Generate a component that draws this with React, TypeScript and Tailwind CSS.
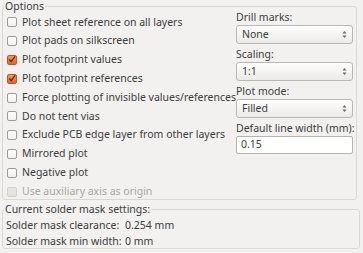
import { ReactNode } from "react";

const leftOptions = [
  { label: "Plot sheet reference on all layers", checked: false },
  { label: "Plot pads on silkscreen", checked: false },
  { label: "Plot footprint values", checked: true },
  { label: "Plot footprint references", checked: true },
  { label: "Force plotting of invisible values/references", checked: false },
  { label: "Do not tent vias", checked: false },
  { label: "Exclude PCB edge layer from other layers", checked: false },
  { label: "Mirrored plot", checked: false },
  { label: "Negative plot", checked: false },
  { label: "Use auxiliary axis as origin", checked: false, disabled: true },
];

function CheckBox({ checked, disabled }: { checked: boolean; disabled?: boolean }) {
  if (checked) {
    return (
      <span className="w-[10px] h-[10px] rounded-[2px] border border-[#c4561f] bg-gradient-to-b from-[#f39461] to-[#e2642d] flex items-center justify-center flex-shrink-0">
        <svg width="9" height="9" viewBox="0 0 9 9" className="-mt-[1px]">
          <path d="M1.5 4.5 L3.6 7 L8 1" fill="none" stroke="#5a2a12" strokeWidth="1.4" />
        </svg>
      </span>
    );
  }
  if (disabled) {
    return <span className="w-[10px] h-[10px] rounded-[2px] border border-[#d3d0cc] bg-[#e6e4e1] flex-shrink-0" />;
  }
  return (
    <span className="w-[10px] h-[10px] rounded-[2px] border border-[#9f9b96] bg-gradient-to-b from-white to-[#f1f0ef] flex-shrink-0" />
  );
}

function Select({ value }: { value: string }) {
  return (
    <div className="h-[19px] rounded-[3px] border border-[#bab6b1] bg-gradient-to-b from-[#fefefe] to-[#ebeae8] flex items-center justify-between pl-[5px] pr-[5px]">
      <span>{value}</span>
      <svg width="5" height="9" viewBox="0 0 5 9">
        <path d="M0.5 3.5 L2.5 1 L4.5 3.5 Z" fill="#6b6966" />
        <path d="M0.5 5.5 L2.5 8 L4.5 5.5 Z" fill="#6b6966" />
      </svg>
    </div>
  );
}

function Field({ label, children }: { label: string; children: ReactNode }) {
  return (
    <div className="flex flex-col">
      <div className="h-[14px] leading-[14px] mb-[1px] whitespace-nowrap">{label}</div>
      {children}
    </div>
  );
}

export default function App() {
  return (
    <div className="w-[363px] h-[253px] bg-[#f2f1f0] text-[#3c3c3c] text-[10.5px] font-['Noto_Sans',sans-serif] overflow-hidden">
      <fieldset className="ml-[2px] w-[355px] h-[200px] border border-[#dbd8d4] rounded-[3px]">
        <legend className="ml-[1px] pl-[1px] pr-[1px] leading-[12px]">Options</legend>
        <div className="flex">
          <div className="flex flex-col pl-[4px] pt-[1px] w-[233px]">
            {leftOptions.map((o) => (
              <div key={o.label} className="h-[18.8px] flex items-center gap-[5px]">
                <CheckBox checked={o.checked} disabled={o.disabled} />
                <span className={o.disabled ? "text-[#a8a6a2] whitespace-nowrap" : "whitespace-nowrap"}>{o.label}</span>
              </div>
            ))}
          </div>
          <div className="flex flex-col gap-[3px] w-[117px] -mt-[2px]">
            <Field label="Drill marks:">
              <Select value="None" />
            </Field>
            <Field label="Scaling:">
              <Select value="1:1" />
            </Field>
            <Field label="Plot mode:">
              <Select value="Filled" />
            </Field>
            <Field label="Default line width (mm):">
              <div className="h-[18px] rounded-[2px] border border-[#b7b3ae] bg-white flex items-center pl-[4px]">0.15</div>
            </Field>
          </div>
        </div>
      </fieldset>
      <fieldset className="ml-[2px] mt-[3px] w-[358px] h-[46px] border border-[#dbd8d4] rounded-[3px]">
        <legend className="ml-[1px] pl-[1px] pr-[1px] leading-[12px]">Current solder mask settings:</legend>
        <div className="grid grid-cols-[119px_1fr] pl-[3px] pt-[2px] leading-[16px] whitespace-nowrap">
          <span>Solder mask clearance:</span>
          <span>0.254 mm</span>
          <span>Solder mask min width:</span>
          <span>0 mm</span>
        </div>
      </fieldset>
    </div>
  );
}
